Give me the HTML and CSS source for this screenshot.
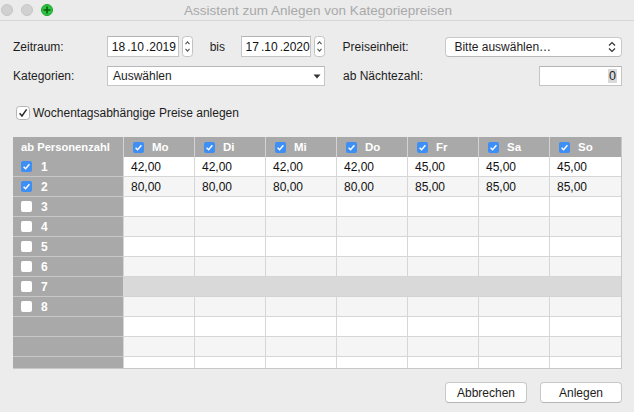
FILE: index.html
```html
<!DOCTYPE html>
<html lang="de">
<head>
<meta charset="utf-8">
<title>Assistent zum Anlegen von Kategoriepreisen</title>
<link rel="stylesheet" href="styles.css">
</head>
<body>
<div class="window">
  <div class="titlebar">
    <div class="lights">
      <span class="light"></span>
      <span class="light"></span>
      <span class="light green"><svg width="12" height="12" viewBox="0 0 12 12"><path d="M6 2.6V9.4M2.6 6H9.4" stroke="#0a5e0c" stroke-width="1.6"/></svg></span>
    </div>
    <div class="title">Assistent zum Anlegen von Kategoriepreisen</div>
  </div>

  <div class="content">
    <div class="row row1">
      <span class="lbl">Zeitraum:</span>
      <div class="field date d1">18<span class="sep">.</span>10<span class="sep">.</span>2019</div>
      <span class="stepper"><svg width="11" height="21" viewBox="0 0 11 21"><rect x="0.5" y="0.5" width="10" height="20" rx="3" fill="#fff" stroke="#c2c2c2"/><path d="M3.5 8.2L5.5 5.8L7.5 8.2M3.5 12.8L5.5 15.2L7.5 12.8" fill="none" stroke="#555" stroke-width="1.1"/></svg></span>
      <span class="bis">bis</span>
      <div class="field date d2">17<span class="sep">.</span>10<span class="sep">.</span>2020</div>
      <span class="stepper"><svg width="11" height="21" viewBox="0 0 11 21"><rect x="0.5" y="0.5" width="10" height="20" rx="3" fill="#fff" stroke="#c2c2c2"/><path d="M3.5 8.2L5.5 5.8L7.5 8.2M3.5 12.8L5.5 15.2L7.5 12.8" fill="none" stroke="#555" stroke-width="1.1"/></svg></span>
      <span class="lbl2">Preiseinheit:</span>
      <div class="popup">
        <span>Bitte auswählen…</span>
        <svg width="8" height="12" viewBox="0 0 8 12"><path d="M1 4.5L4 1.5L7 4.5M1 7.5L4 10.5L7 7.5" fill="none" stroke="#333" stroke-width="1.2"/></svg>
      </div>
    </div>

    <div class="row row2">
      <span class="lbl">Kategorien:</span>
      <div class="combo">
        <span>Auswählen</span>
        <svg width="8" height="5" viewBox="0 0 8 5"><path d="M0.5 0.5H7.5L4 4.5Z" fill="#333"/></svg>
      </div>
      <span class="lbl2 grow">ab Nächtezahl:</span>
      <div class="field nights"><span class="sel">0</span></div>
    </div>

    <div class="row row3">
      <span class="cb"><svg width="14" height="14" viewBox="0 0 14 14"><rect x="0.5" y="0.5" width="13" height="13" rx="3" fill="#fff" stroke="#b4b4b4"/><path d="M3.6 7.3L6 10L10.6 3.4" fill="none" stroke="#2a2a2a" stroke-width="1.5"/></svg></span>
      <span class="cblabel">Wochentagsabhängige Preise anlegen</span>
    </div>

    <div class="table">
      <div class="tr head">
        <div class="th first">ab Personenzahl</div>
        <div class="th day"><span class="bx on"><svg width="11" height="11" viewBox="0 0 11 11"><path d="M2.6 5.7L4.6 7.8L8.4 3.2" fill="none" stroke="#fff" stroke-width="1.4"/></svg></span>Mo</div>
        <div class="th day"><span class="bx on"><svg width="11" height="11" viewBox="0 0 11 11"><path d="M2.6 5.7L4.6 7.8L8.4 3.2" fill="none" stroke="#fff" stroke-width="1.4"/></svg></span>Di</div>
        <div class="th day"><span class="bx on"><svg width="11" height="11" viewBox="0 0 11 11"><path d="M2.6 5.7L4.6 7.8L8.4 3.2" fill="none" stroke="#fff" stroke-width="1.4"/></svg></span>Mi</div>
        <div class="th day"><span class="bx on"><svg width="11" height="11" viewBox="0 0 11 11"><path d="M2.6 5.7L4.6 7.8L8.4 3.2" fill="none" stroke="#fff" stroke-width="1.4"/></svg></span>Do</div>
        <div class="th day"><span class="bx on"><svg width="11" height="11" viewBox="0 0 11 11"><path d="M2.6 5.7L4.6 7.8L8.4 3.2" fill="none" stroke="#fff" stroke-width="1.4"/></svg></span>Fr</div>
        <div class="th day"><span class="bx on"><svg width="11" height="11" viewBox="0 0 11 11"><path d="M2.6 5.7L4.6 7.8L8.4 3.2" fill="none" stroke="#fff" stroke-width="1.4"/></svg></span>Sa</div>
        <div class="th day"><span class="bx on"><svg width="11" height="11" viewBox="0 0 11 11"><path d="M2.6 5.7L4.6 7.8L8.4 3.2" fill="none" stroke="#fff" stroke-width="1.4"/></svg></span>So</div>
      </div>

      <div class="tr">
        <div class="rh"><span class="bx on"><svg width="11" height="11" viewBox="0 0 11 11"><path d="M2.6 5.7L4.6 7.8L8.4 3.2" fill="none" stroke="#fff" stroke-width="1.4"/></svg></span>1</div>
        <div class="td">42,00</div><div class="td">42,00</div><div class="td">42,00</div><div class="td">42,00</div><div class="td">45,00</div><div class="td">45,00</div><div class="td">45,00</div>
      </div>
      <div class="tr alt">
        <div class="rh"><span class="bx on"><svg width="11" height="11" viewBox="0 0 11 11"><path d="M2.6 5.7L4.6 7.8L8.4 3.2" fill="none" stroke="#fff" stroke-width="1.4"/></svg></span>2</div>
        <div class="td">80,00</div><div class="td">80,00</div><div class="td">80,00</div><div class="td">80,00</div><div class="td">85,00</div><div class="td">85,00</div><div class="td">85,00</div>
      </div>
      <div class="tr">
        <div class="rh"><span class="bx"></span>3</div>
        <div class="td"></div><div class="td"></div><div class="td"></div><div class="td"></div><div class="td"></div><div class="td"></div><div class="td"></div>
      </div>
      <div class="tr alt">
        <div class="rh"><span class="bx"></span>4</div>
        <div class="td"></div><div class="td"></div><div class="td"></div><div class="td"></div><div class="td"></div><div class="td"></div><div class="td"></div>
      </div>
      <div class="tr">
        <div class="rh"><span class="bx"></span>5</div>
        <div class="td"></div><div class="td"></div><div class="td"></div><div class="td"></div><div class="td"></div><div class="td"></div><div class="td"></div>
      </div>
      <div class="tr alt">
        <div class="rh"><span class="bx"></span>6</div>
        <div class="td"></div><div class="td"></div><div class="td"></div><div class="td"></div><div class="td"></div><div class="td"></div><div class="td"></div>
      </div>
      <div class="tr selected">
        <div class="rh"><span class="bx"></span>7</div>
        <div class="td"></div><div class="td"></div><div class="td"></div><div class="td"></div><div class="td"></div><div class="td"></div><div class="td"></div>
      </div>
      <div class="tr alt">
        <div class="rh"><span class="bx"></span>8</div>
        <div class="td"></div><div class="td"></div><div class="td"></div><div class="td"></div><div class="td"></div><div class="td"></div><div class="td"></div>
      </div>
      <div class="tr">
        <div class="rh"></div>
        <div class="td"></div><div class="td"></div><div class="td"></div><div class="td"></div><div class="td"></div><div class="td"></div><div class="td"></div>
      </div>
      <div class="tr alt">
        <div class="rh"></div>
        <div class="td"></div><div class="td"></div><div class="td"></div><div class="td"></div><div class="td"></div><div class="td"></div><div class="td"></div>
      </div>
      <div class="tr">
        <div class="rh"></div>
        <div class="td"></div><div class="td"></div><div class="td"></div><div class="td"></div><div class="td"></div><div class="td"></div><div class="td"></div>
      </div>
    </div>

    <div class="buttons">
      <button class="btn">Abbrechen</button>
      <button class="btn">Anlegen</button>
    </div>
  </div>
</div>
</body>
</html>
```

FILE: styles.css
```css
* { box-sizing: border-box; }

html, body {
  margin: 0;
  padding: 0;
  background: #ececec;
}

body {
  font-family: "Liberation Sans", Helvetica, Arial, sans-serif;
  font-size: 12px;
  color: #1d1d1d;
}

.window {
  width: 634px;
  height: 412px;
  background: #ececec;
  overflow: hidden;
}

/* Title bar */
.titlebar {
  height: 21px;
  border-bottom: 1px solid #d6d6d6;
  background: #ebebeb;
  display: flex;
  align-items: center;
  position: relative;
}

.lights {
  display: flex;
  gap: 8px;
  padding-left: 1px;
  position: absolute;
  left: 0;
  top: 4px;
}

.light {
  width: 12px;
  height: 12px;
  border-radius: 50%;
  background: #d1d1d1;
  border: 1px solid #c6c6c6;
  display: flex;
  align-items: center;
  justify-content: center;
}

.light svg { display: block; margin: -1px; }

.light.green {
  background: #2dc441;
  border-color: #1fa22f;
}

.title {
  flex: 1;
  text-align: center;
  font-size: 13.5px;
  color: #a9a9a9;
  padding-left: 2px;
}

/* Content */
.content {
  padding: 15px 12px 0 13px;
}

.row {
  display: flex;
  align-items: center;
}

.row1 { height: 21px; }
.row2 { height: 20px; margin-top: 9px; }
.row3 { height: 14px; margin-top: 20px; padding-left: 3px; }

.lbl { width: 94px; }

.lbl2 {
  margin-left: 18px;
  width: 103px;
}

.lbl2.grow { flex: 1; width: auto; }

.field {
  background: #fff;
  border: 1px solid #c4c4c4;
  border-top-color: #b4b4b4;
  height: 21px;
  display: flex;
  align-items: center;
}

.date {
  padding-left: 4px;
  font-size: 12px;
  color: #111;
  white-space: nowrap;
}

.date .sep { margin: 0 0 0 2px; }

.d1 { width: 72px; }
.d2 { width: 70px; }

.stepper {
  margin-left: 3px;
  display: flex;
}

.bis {
  margin-left: 17px;
  width: 31px;
}

.popup {
  width: 177px;
  height: 20px;
  background: #fff;
  border: 1px solid #c9c9c9;
  border-bottom-color: #b9b9b9;
  border-radius: 4px;
  display: flex;
  align-items: center;
  justify-content: space-between;
  padding: 0 5px 0 8px;
  margin-top: 1px;
}

.popup svg { display: block; }

.combo {
  width: 218px;
  height: 20px;
  background: #fff;
  border: 1px solid #c6c6c6;
  border-top-color: #b8b8b8;
  display: flex;
  align-items: center;
  justify-content: space-between;
  padding: 0 3px 0 5px;
}

.combo svg { display: block; }

.nights {
  width: 83px;
  height: 20px;
  justify-content: flex-end;
  padding-right: 4px;
}

.nights .sel {
  background: #d9d9d9;
  padding: 0 1px;
  line-height: 14px;
  font-size: 12.5px;
}

.cb { display: flex; }
.cblabel { margin-left: 3px; }

/* Table */
.table {
  margin-top: 17px;
  width: 609px;
  height: 232px;
  overflow: hidden;
  border-right: 1px solid #c8c8c8;
  border-bottom: 1px solid #c8c8c8;
  background: #fff;
}

.tr {
  display: grid;
  grid-template-columns: 110px 71px 71px 71px 71px 71px 71px 72px;
  height: 20px;
  background: #fff;
}

.tr.alt { background: #f5f5f5; }
.tr.selected { background: #d9d9d9; }

.tr > div {
  display: flex;
  align-items: center;
  height: 20px;
}

.th {
  background: #a9a9a9;
  color: #fff;
  font-weight: bold;
  font-size: 11.5px;
}

.th.first { padding-left: 8px; font-size: 11.2px; }

.th.day {
  border-left: 1px solid #d3d3d3;
  padding-left: 9px;
}

.th.day .bx { margin-right: 8px; }

.rh {
  background: #a9a9a9;
  color: #fff;
  font-weight: bold;
  font-size: 12px;
  padding-left: 8px;
  border-bottom: 1px solid #c7c7c7;
}

.rh .bx { margin-right: 9px; }

.td {
  border-left: 1px solid #d6d6d6;
  border-bottom: 1px solid #d6d6d6;
  padding-left: 7px;
  color: #111;
}

.tr.selected .td {
  border-left-color: #d9d9d9;
  border-bottom-color: #d3d3d3;
}

.bx {
  width: 11px;
  height: 11px;
  border-radius: 2px;
  background: #fff;
  display: inline-flex;
  flex: none;
}

.bx.on { background: #3d8ef5; }
.bx svg { display: block; }

/* Buttons */
.buttons {
  display: flex;
  justify-content: flex-end;
  gap: 13px;
  margin-top: 13px;
}

.btn {
  width: 82px;
  height: 21px;
  background: #fff;
  border: 1px solid #c8c8c8;
  border-bottom-color: #b5b5b5;
  border-radius: 4px;
  font-family: "Liberation Sans", Helvetica, Arial, sans-serif;
  font-size: 12px;
  color: #1d1d1d;
  padding: 0;
}
```
